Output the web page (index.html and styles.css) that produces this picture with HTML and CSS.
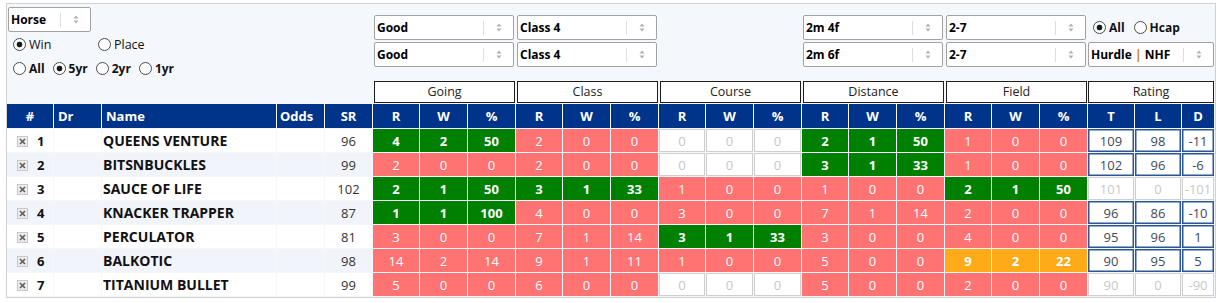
FILE: index.html
```html
<!DOCTYPE html>
<html lang="en">
<head>
<meta charset="utf-8">
<title>Form</title>
<link rel="stylesheet" href="styles.css">
</head>
<body>
<div class="panel">
  <div class="top">
    <div class="left">
      <div class="select sel-horse"><span class="val">Horse</span><span class="arrow"><svg width="6" height="9" viewBox="0 0 6 9"><path d="M0.5 3.5L3 0.5L5.5 3.5Z M0.5 5.5L3 8.5L5.5 5.5Z" fill="#b0b0b0"/></svg></span></div>
      <div class="radios r1">
        <label class="radio wide"><input type="radio" name="wp" checked>Win</label>
        <label class="radio"><input type="radio" name="wp">Place</label>
      </div>
      <div class="radios r2 bold">
        <label class="radio"><input type="radio" name="yr">All</label>
        <label class="radio"><input type="radio" name="yr" checked>5yr</label>
        <label class="radio"><input type="radio" name="yr">2yr</label>
        <label class="radio"><input type="radio" name="yr">1yr</label>
      </div>
    </div>
    <div class="selcol">
      <div class="select"><span class="val">Good</span><span class="arrow"><svg width="6" height="9" viewBox="0 0 6 9"><path d="M0.5 3.5L3 0.5L5.5 3.5Z M0.5 5.5L3 8.5L5.5 5.5Z" fill="#b0b0b0"/></svg></span></div>
      <div class="select"><span class="val">Good</span><span class="arrow"><svg width="6" height="9" viewBox="0 0 6 9"><path d="M0.5 3.5L3 0.5L5.5 3.5Z M0.5 5.5L3 8.5L5.5 5.5Z" fill="#b0b0b0"/></svg></span></div>
    </div>
    <div class="selcol">
      <div class="select"><span class="val">Class 4</span><span class="arrow"><svg width="6" height="9" viewBox="0 0 6 9"><path d="M0.5 3.5L3 0.5L5.5 3.5Z M0.5 5.5L3 8.5L5.5 5.5Z" fill="#b0b0b0"/></svg></span></div>
      <div class="select"><span class="val">Class 4</span><span class="arrow"><svg width="6" height="9" viewBox="0 0 6 9"><path d="M0.5 3.5L3 0.5L5.5 3.5Z M0.5 5.5L3 8.5L5.5 5.5Z" fill="#b0b0b0"/></svg></span></div>
    </div>
    <div class="selcol"></div>
    <div class="selcol">
      <div class="select"><span class="val">2m 4f</span><span class="arrow"><svg width="6" height="9" viewBox="0 0 6 9"><path d="M0.5 3.5L3 0.5L5.5 3.5Z M0.5 5.5L3 8.5L5.5 5.5Z" fill="#b0b0b0"/></svg></span></div>
      <div class="select"><span class="val">2m 6f</span><span class="arrow"><svg width="6" height="9" viewBox="0 0 6 9"><path d="M0.5 3.5L3 0.5L5.5 3.5Z M0.5 5.5L3 8.5L5.5 5.5Z" fill="#b0b0b0"/></svg></span></div>
    </div>
    <div class="selcol">
      <div class="select"><span class="val">2-7</span><span class="arrow"><svg width="6" height="9" viewBox="0 0 6 9"><path d="M0.5 3.5L3 0.5L5.5 3.5Z M0.5 5.5L3 8.5L5.5 5.5Z" fill="#b0b0b0"/></svg></span></div>
      <div class="select"><span class="val">2-7</span><span class="arrow"><svg width="6" height="9" viewBox="0 0 6 9"><path d="M0.5 3.5L3 0.5L5.5 3.5Z M0.5 5.5L3 8.5L5.5 5.5Z" fill="#b0b0b0"/></svg></span></div>
    </div>
    <div class="selcol rating">
      <div class="radios bold">
        <label class="radio"><input type="radio" name="hc" checked>All</label>
        <label class="radio"><input type="radio" name="hc">Hcap</label>
      </div>
      <div class="select"><span class="val">Hurdle <span class="pipe">|</span> NHF</span><span class="arrow"><svg width="6" height="9" viewBox="0 0 6 9"><path d="M0.5 3.5L3 0.5L5.5 3.5Z M0.5 5.5L3 8.5L5.5 5.5Z" fill="#b0b0b0"/></svg></span></div>
    </div>
  </div>

  <div class="groups">
    <div></div>
    <div class="grp">Going</div>
    <div class="grp">Class</div>
    <div class="grp">Course</div>
    <div class="grp">Distance</div>
    <div class="grp">Field</div>
    <div class="grp last">Rating</div>
  </div>

  <table class="form">
    <colgroup>
      <col class="w46"><col class="w47"><col class="w174"><col class="w47"><col class="w47">
      <col class="w46"><col class="w47"><col class="w47">
      <col class="w46"><col class="w47"><col class="w47">
      <col class="w46"><col class="w47"><col class="w47">
      <col class="w46"><col class="w47"><col class="w47">
      <col class="w46"><col class="w47"><col class="w47">
      <col class="w46"><col class="w46"><col class="w32">
    </colgroup>
    <thead>
      <tr>
        <th>#</th><th class="l">Dr</th><th class="l">Name</th><th class="l o">Odds</th><th>SR</th>
        <th>R</th><th>W</th><th>%</th>
        <th>R</th><th>W</th><th>%</th>
        <th>R</th><th>W</th><th>%</th>
        <th>R</th><th>W</th><th>%</th>
        <th>R</th><th>W</th><th>%</th>
        <th>T</th><th>L</th><th>D</th>
      </tr>
    </thead>
    <tbody>
      <tr>
        <td class="b num"><svg class="x" width="11" height="11" viewBox="0 0 11 11"><rect x="0.5" y="0.5" width="10" height="10" fill="#ececec" stroke="#c8c8c8"/><path d="M3 3L8 8M8 3L3 8" stroke="#606060" stroke-width="1.7"/></svg>1</td>
        <td class="b"></td><td class="b name">QUEENS VENTURE</td><td class="b"></td><td class="b sr">96</td>
        <td class="g">4</td><td class="g">2</td><td class="g">50</td>
        <td class="r">2</td><td class="r">0</td><td class="r">0</td>
        <td class="e">0</td><td class="e">0</td><td class="e">0</td>
        <td class="g">2</td><td class="g">1</td><td class="g">50</td>
        <td class="r">1</td><td class="r">0</td><td class="r">0</td>
        <td class="rt">109</td><td class="rt">98</td><td class="rt">-11</td>
      </tr>
      <tr class="alt">
        <td class="b num"><svg class="x" width="11" height="11" viewBox="0 0 11 11"><rect x="0.5" y="0.5" width="10" height="10" fill="#ececec" stroke="#c8c8c8"/><path d="M3 3L8 8M8 3L3 8" stroke="#606060" stroke-width="1.7"/></svg>2</td>
        <td class="b"></td><td class="b name">BITSNBUCKLES</td><td class="b"></td><td class="b sr">99</td>
        <td class="r">2</td><td class="r">0</td><td class="r">0</td>
        <td class="r">2</td><td class="r">0</td><td class="r">0</td>
        <td class="e">0</td><td class="e">0</td><td class="e">0</td>
        <td class="g">3</td><td class="g">1</td><td class="g">33</td>
        <td class="r">1</td><td class="r">0</td><td class="r">0</td>
        <td class="rt">102</td><td class="rt">96</td><td class="rt">-6</td>
      </tr>
      <tr>
        <td class="b num"><svg class="x" width="11" height="11" viewBox="0 0 11 11"><rect x="0.5" y="0.5" width="10" height="10" fill="#ececec" stroke="#c8c8c8"/><path d="M3 3L8 8M8 3L3 8" stroke="#606060" stroke-width="1.7"/></svg>3</td>
        <td class="b"></td><td class="b name">SAUCE OF LIFE</td><td class="b"></td><td class="b sr">102</td>
        <td class="g">2</td><td class="g">1</td><td class="g">50</td>
        <td class="g">3</td><td class="g">1</td><td class="g">33</td>
        <td class="r">1</td><td class="r">0</td><td class="r">0</td>
        <td class="r">1</td><td class="r">0</td><td class="r">0</td>
        <td class="g">2</td><td class="g">1</td><td class="g">50</td>
        <td class="rt off">101</td><td class="rt off">0</td><td class="rt off">-101</td>
      </tr>
      <tr class="alt">
        <td class="b num"><svg class="x" width="11" height="11" viewBox="0 0 11 11"><rect x="0.5" y="0.5" width="10" height="10" fill="#ececec" stroke="#c8c8c8"/><path d="M3 3L8 8M8 3L3 8" stroke="#606060" stroke-width="1.7"/></svg>4</td>
        <td class="b"></td><td class="b name">KNACKER TRAPPER</td><td class="b"></td><td class="b sr">87</td>
        <td class="g">1</td><td class="g">1</td><td class="g">100</td>
        <td class="r">4</td><td class="r">0</td><td class="r">0</td>
        <td class="r">3</td><td class="r">0</td><td class="r">0</td>
        <td class="r">7</td><td class="r">1</td><td class="r">14</td>
        <td class="r">2</td><td class="r">0</td><td class="r">0</td>
        <td class="rt">96</td><td class="rt">86</td><td class="rt">-10</td>
      </tr>
      <tr>
        <td class="b num"><svg class="x" width="11" height="11" viewBox="0 0 11 11"><rect x="0.5" y="0.5" width="10" height="10" fill="#ececec" stroke="#c8c8c8"/><path d="M3 3L8 8M8 3L3 8" stroke="#606060" stroke-width="1.7"/></svg>5</td>
        <td class="b"></td><td class="b name">PERCULATOR</td><td class="b"></td><td class="b sr">81</td>
        <td class="r">3</td><td class="r">0</td><td class="r">0</td>
        <td class="r">7</td><td class="r">1</td><td class="r">14</td>
        <td class="g">3</td><td class="g">1</td><td class="g">33</td>
        <td class="r">3</td><td class="r">0</td><td class="r">0</td>
        <td class="r">4</td><td class="r">0</td><td class="r">0</td>
        <td class="rt">95</td><td class="rt">96</td><td class="rt">1</td>
      </tr>
      <tr class="alt">
        <td class="b num"><svg class="x" width="11" height="11" viewBox="0 0 11 11"><rect x="0.5" y="0.5" width="10" height="10" fill="#ececec" stroke="#c8c8c8"/><path d="M3 3L8 8M8 3L3 8" stroke="#606060" stroke-width="1.7"/></svg>6</td>
        <td class="b"></td><td class="b name">BALKOTIC</td><td class="b"></td><td class="b sr">98</td>
        <td class="r">14</td><td class="r">2</td><td class="r">14</td>
        <td class="r">9</td><td class="r">1</td><td class="r">11</td>
        <td class="r">1</td><td class="r">0</td><td class="r">0</td>
        <td class="r">5</td><td class="r">0</td><td class="r">0</td>
        <td class="o">9</td><td class="o">2</td><td class="o">22</td>
        <td class="rt">90</td><td class="rt">95</td><td class="rt">5</td>
      </tr>
      <tr>
        <td class="b num"><svg class="x" width="11" height="11" viewBox="0 0 11 11"><rect x="0.5" y="0.5" width="10" height="10" fill="#ececec" stroke="#c8c8c8"/><path d="M3 3L8 8M8 3L3 8" stroke="#606060" stroke-width="1.7"/></svg>7</td>
        <td class="b"></td><td class="b name">TITANIUM BULLET</td><td class="b"></td><td class="b sr">99</td>
        <td class="r">5</td><td class="r">0</td><td class="r">0</td>
        <td class="r">6</td><td class="r">0</td><td class="r">0</td>
        <td class="e">0</td><td class="e">0</td><td class="e">0</td>
        <td class="r">5</td><td class="r">0</td><td class="r">0</td>
        <td class="r">2</td><td class="r">0</td><td class="r">0</td>
        <td class="rt off">90</td><td class="rt off">0</td><td class="rt off">-90</td>
      </tr>
    </tbody>
  </table>
</div>
</body>
</html>
```

FILE: styles.css
```css
body {
  margin: 0;
  background: #fff;
  font-family: "Open Sans", "Liberation Sans", sans-serif;
  color: #111;
}

.panel {
  margin: 3px 0 0 6px;
  width: 1208px;
  border: 1px solid #d2d2d2;
  background: #f4f7fc;
}

/* ---------- top filter area ---------- */
.top {
  display: grid;
  grid-template-columns: 366px repeat(5, 143px) 126px;
  height: 77px;
}

.left {
  padding: 3px 0 0 1px;
}

.select {
  display: flex;
  align-items: center;
  box-sizing: border-box;
  height: 25px;
  border: 1px solid #a2a2a2;
  border-radius: 2px;
  background: #fff;
  font-size: 12px;
  font-weight: 700;
  color: #000;
}

.select .val {
  flex: 1;
  padding-left: 2px;
  white-space: nowrap;
  overflow: hidden;
}

.select .arrow {
  flex: none;
  display: flex;
  align-items: center;
  justify-content: center;
  width: 29px;
  height: 14px;
  border-left: 1px solid #dedede;
}

.pipe {
  color: #c88400;
}

.sel-horse {
  width: 83px;
}

.selcol {
  display: flex;
  flex-direction: column;
  gap: 2px;
  padding: 11px 0 0 1px;
}

.selcol .select {
  width: 140px;
}

.selcol.rating {
  padding-left: 0;
}

.selcol.rating .select {
  width: 126px;
}

.radios {
  display: flex;
  align-items: center;
  gap: 8px;
  height: 24px;
  padding-left: 5px;
  font-size: 12px;
  color: #111;
}

.r1 {
  font-size: 12.5px;
}

.selcol.rating .radios {
  height: 25px;
  gap: 9px;
}

.bold {
  font-weight: 700;
}

.radio {
  display: inline-flex;
  align-items: center;
  gap: 3px;
}

.radio.wide {
  width: 77px;
}

.radio input {
  appearance: none;
  -webkit-appearance: none;
  margin: 0;
  width: 13px;
  height: 13px;
  box-sizing: border-box;
  border: 1px solid #4a4a4a;
  border-radius: 50%;
  background: #fff;
}

.radio input:checked {
  background: radial-gradient(circle, #1a1a1a 0 2.6px, #fff 3.2px);
}

/* ---------- group header boxes ---------- */
.groups {
  display: grid;
  grid-template-columns: 366px repeat(5, 143px) 126px;
  height: 22px;
}

.grp {
  box-sizing: border-box;
  width: 141px;
  margin-left: 1px;
  border: 1px solid #1c1c1c;
  background: #fff;
  font-size: 12.5px;
  line-height: 20px;
  text-align: center;
  color: #222;
}

.grp.last {
  width: 126px;
  margin-left: 0;
}

/* ---------- main table ---------- */
.form {
  margin-left: -1px;
  width: 1209px;
  table-layout: fixed;
  border-collapse: separate;
  border-spacing: 1px;
  font-size: 13px;
}

.w32 { width: 32px; }
.w46 { width: 46px; }
.w47 { width: 47px; }
.w174 { width: 174px; }

.form th {
  height: 24px;
  padding: 0;
  background: #00338a;
  color: #fff;
  font-weight: 700;
  text-align: center;
}

.form th.l {
  text-align: left;
  padding-left: 4px;
}

.form th.o {
  padding-left: 3px;
}

.form td {
  height: 23px;
  padding: 0;
  text-align: center;
  white-space: nowrap;
}

.form td.b {
  background: #fff;
}

.form tr.alt td.b {
  background: #f1f4fa;
}

.form td.num {
  text-align: left;
  padding-left: 10px;
  font-weight: 700;
}

.x {
  vertical-align: -1px;
  margin-right: 9px;
}

.form td.name {
  text-align: left;
  padding-left: 1px;
  font-size: 14px;
  font-weight: 700;
  color: #111;
}

.form td.sr {
  color: #333;
}

.form td.g {
  background: #008000;
  color: #fff;
  font-weight: 700;
}

.form td.r {
  background: #ff7373;
  color: #fff;
}

.form td.o {
  background: #ffab19;
  color: #fff;
  font-weight: 700;
}

.form td.e {
  background: #fff;
  box-shadow: inset 0 0 0 1px #cfcfcf;
  color: #c6c6c6;
}

.form td.rt {
  background: #fff;
  box-shadow: inset 0 0 0 1.5px #2b5797;
  color: #3f4a58;
}

.form td.rt.off {
  box-shadow: inset 0 0 0 1px #cfcfcf;
  color: #c8c8c8;
}
```
